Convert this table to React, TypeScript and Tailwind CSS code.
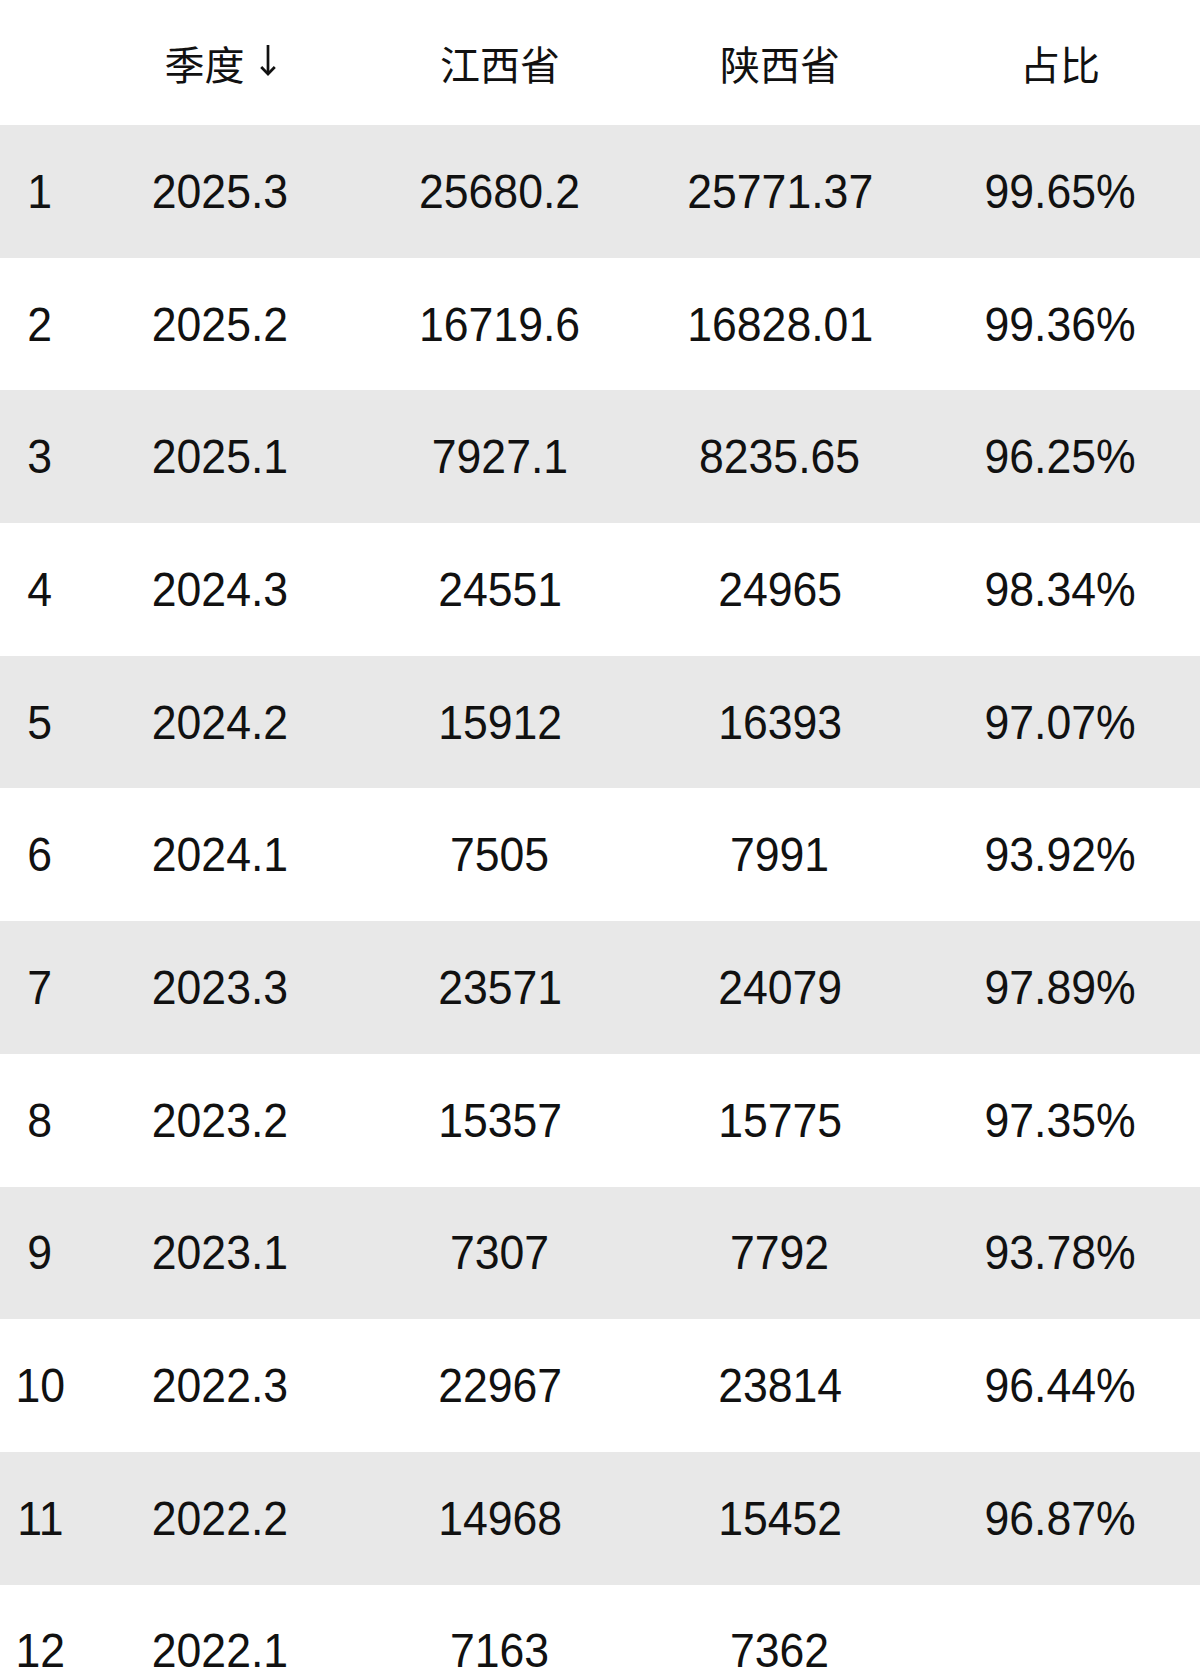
const rows: [string, string, string, string, string][] = [
  ["1", "2025.3", "25680.2", "25771.37", "99.65%"],
  ["2", "2025.2", "16719.6", "16828.01", "99.36%"],
  ["3", "2025.1", "7927.1", "8235.65", "96.25%"],
  ["4", "2024.3", "24551", "24965", "98.34%"],
  ["5", "2024.2", "15912", "16393", "97.07%"],
  ["6", "2024.1", "7505", "7991", "93.92%"],
  ["7", "2023.3", "23571", "24079", "97.89%"],
  ["8", "2023.2", "15357", "15775", "97.35%"],
  ["9", "2023.1", "7307", "7792", "93.78%"],
  ["10", "2022.3", "22967", "23814", "96.44%"],
  ["11", "2022.2", "14968", "15452", "96.87%"],
  ["12", "2022.1", "7163", "7362", ""],
];

function SortArrow() {
  return (
    <svg width="16" height="31" viewBox="0 0 16 31" className="ml-[15px] mb-[4px]" fill="none">
      <path d="M8 0 V29" stroke="#111" strokeWidth="2.7" />
      <path d="M1.2 22 L8 29 L14.8 22" stroke="#111" strokeWidth="2.7" />
    </svg>
  );
}

function Cell({ children }: { children: React.ReactNode }) {
  return (
    <div className="flex items-center justify-center">
      <span className="inline-block scale-x-[0.91] whitespace-nowrap">{children}</span>
    </div>
  );
}

export default function App() {
  return (
    <div className="w-[1200px] h-[1670px] overflow-hidden bg-white text-[#111]">
      <div className="grid h-[125px] grid-cols-[80px_repeat(4,280px)] font-['Noto_Sans_CJK_SC',sans-serif] text-[40px] leading-none">
        <div />
        <div className="flex items-center justify-center">
          <span>季度</span>
          <SortArrow />
        </div>
        <div className="flex items-center justify-center">江西省</div>
        <div className="flex items-center justify-center">陕西省</div>
        <div className="flex items-center justify-center">占比</div>
      </div>
      {rows.map((r, i) => (
        <div
          key={r[0]}
          className={`grid h-[132.7px] grid-cols-[80px_repeat(4,280px)] font-['Liberation_Sans',Arial,sans-serif] text-[49px] leading-none ${
            i % 2 === 0 ? "bg-[#e8e8e8]" : "bg-white"
          }`}
        >
          {r.map((v, j) => (
            <Cell key={j}>{v}</Cell>
          ))}
        </div>
      ))}
    </div>
  );
}
